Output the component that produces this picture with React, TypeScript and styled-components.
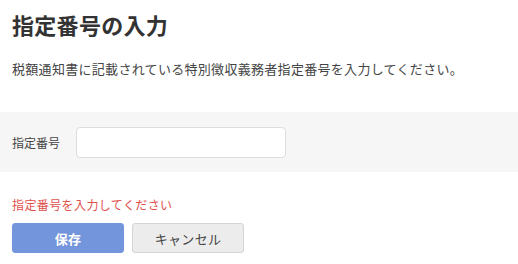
import React, { useState } from 'react';
import styled, { createGlobalStyle } from 'styled-components';

const GlobalStyle = createGlobalStyle`
  html, body {
    margin: 0;
    padding: 0;
    background: #fff;
  }
  body {
    font-family: "Noto Sans CJK JP", "Noto Sans", sans-serif;
    color: #333;
  }
`;

const Page = styled.div`
  width: 518px;
  padding-top: 8px;
`;

const Title = styled.h1`
  margin: 0;
  padding: 0 12px;
  font-size: 22px;
  line-height: 32px;
  font-weight: 700;
  letter-spacing: 0.3px;
  color: #333;
`;

const Lead = styled.p`
  margin: 19px 0 0;
  padding: 0 12px;
  font-size: 13px;
  line-height: 20px;
  letter-spacing: 0.3px;
  color: #444;
`;

const FormPanel = styled.div`
  margin-top: 33px;
  height: 60px;
  background: #f6f6f6;
  padding: 0 12px;
  display: flex;
  align-items: center;
`;

const FieldLabel = styled.label`
  width: 64px;
  font-size: 12px;
  color: #444;
`;

const TextInput = styled.input`
  box-sizing: border-box;
  width: 210px;
  height: 31px;
  border: 1px solid #ddd;
  border-radius: 4px;
  background: #fff;
  padding: 0 8px;
  font-size: 13px;
  font-family: inherit;

  &:focus {
    outline: none;
    border-color: #7094dc;
  }
`;

const ErrorText = styled.div`
  margin-top: 23px;
  padding: 0 12px;
  font-size: 12px;
  line-height: 20px;
  letter-spacing: 0.4px;
  color: #e0504b;
`;

const ButtonRow = styled.div`
  margin-top: 8px;
  padding: 0 12px;
  display: flex;
  gap: 8px;
`;

const Button = styled.button<{ $primary?: boolean }>`
  box-sizing: border-box;
  width: 112px;
  height: 30px;
  border-radius: 3px;
  font-family: inherit;
  font-size: 13px;
  letter-spacing: 0.3px;
  cursor: pointer;
  border: 1px solid ${p => (p.$primary ? '#7395dc' : '#d4d4d4')};
  background: ${p => (p.$primary ? '#7395dc' : '#ececec')};
  color: ${p => (p.$primary ? '#fff' : '#444')};
  font-weight: ${p => (p.$primary ? 700 : 400)};
`;

export default function App() {
  const [value, setValue] = useState('');

  return (
    <Page>
      <GlobalStyle />
      <Title>指定番号の入力</Title>
      <Lead>税額通知書に記載されている特別徴収義務者指定番号を入力してください。</Lead>
      <FormPanel>
        <FieldLabel htmlFor="code">指定番号</FieldLabel>
        <TextInput id="code" value={value} onChange={e => setValue(e.target.value)} />
      </FormPanel>
      <ErrorText>指定番号を入力してください</ErrorText>
      <ButtonRow>
        <Button $primary>保存</Button>
        <Button>キャンセル</Button>
      </ButtonRow>
    </Page>
  );
}
